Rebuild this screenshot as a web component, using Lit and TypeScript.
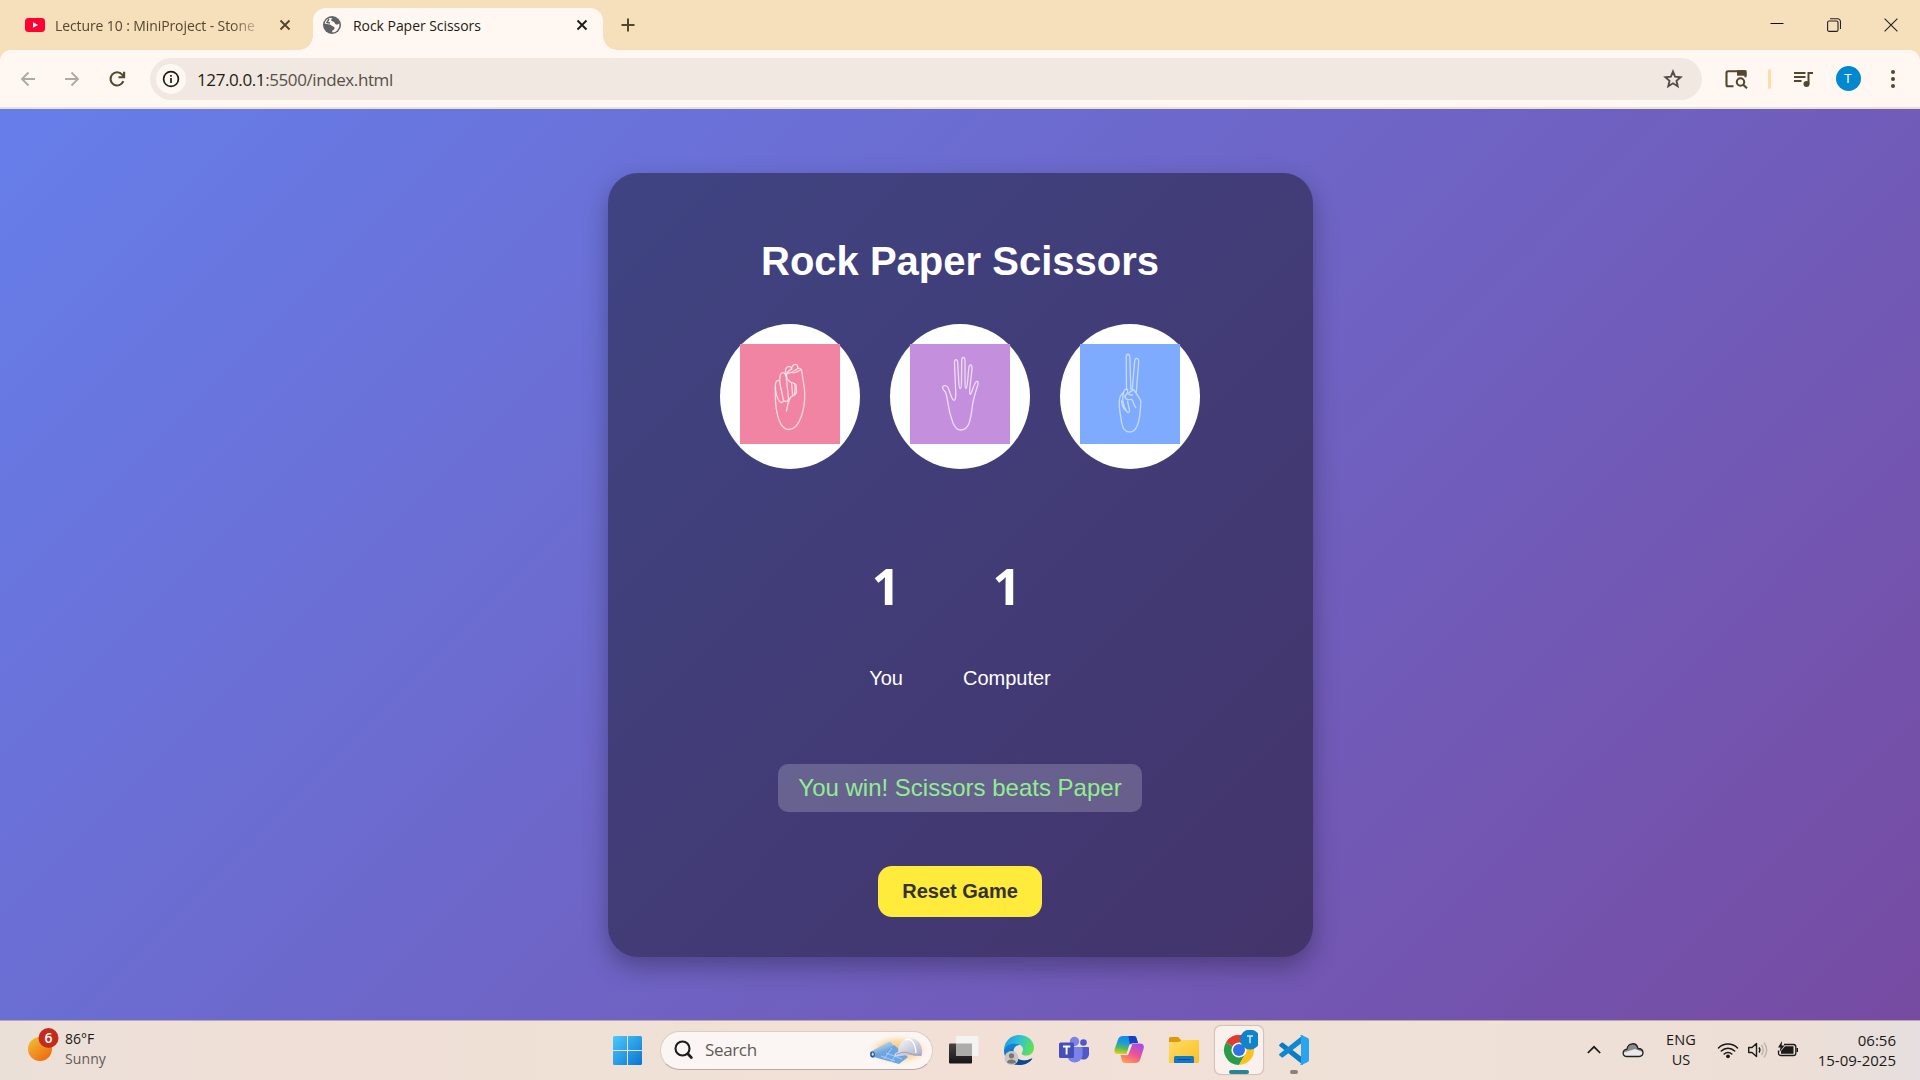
import { LitElement, html, css, svg } from "lit";
import { customElement, property, state } from "lit/decorators.js";

type Choice = "Rock" | "Paper" | "Scissors";

const HANDS: Record<Choice, unknown> = {
  Rock: svg`
    <path d="M35.500 43C34.600 60 37 85.500 49 85.500C60 85.500 65 64 64.700 50C64.500 41 62.500 35 61.800 27C61.500 24.500 59.500 24 58 24.500"/>
    <path d="M35.500 46C35 40 35.800 36.500 37.800 36.300C39.300 36.300 39.800 38 40 40M35.500 46C36.500 52 38.500 57 40.500 58.300C42 59 43.500 58 43.500 56.500L40 40C39.200 33 39.500 29.500 42 28.800C44 28.300 45.500 29.500 45.500 31.500M43.500 56.500C46 58.500 48.500 57 48.500 54.500L46 31.500C44.800 26 45.500 23.200 48.200 22.600C50 22.300 51.500 23.200 51.700 25"/>
    <path d="M46 31C46.500 28 48.500 27 51.500 25C52 21.500 53.500 20.300 55.500 20.300C57.500 20.500 58.300 22.500 57.500 24.500C56 27 53 26.500 51.700 28.200C50 29.500 48 28 46.500 30.500C46.200 34 47.500 36.500 51 38.300C54 39 56.300 39.500 56.300 42L56.500 48.500C55.500 52 52.500 51.500 50.500 53.500C48 57 47.500 62 46.500 67"/>
    <path d="M51.500 39C52 43 52.500 48 52.500 51.500M54.500 40C55.500 43 55.200 46 54.500 50M51.700 28.500C54 29.500 58 27.500 60.500 26"/>`,
  Paper: svg`
    <path d="M35.500 48C33.500 46 32.300 45.200 32.500 43C33.500 41 36.500 41 38 43.500C40 48 41.500 56.300 44 56.300C46 56.300 46 50 45.500 43L44.500 19C44.300 14.500 47.500 14.500 47.700 19L48.800 38C49 42 49.300 44.500 50.200 44.500C51.300 44.500 51.500 42 51.500 38L51.700 17C51.700 12.300 55 12.300 55 17L55 38C55 42 55 44.500 55.800 44.500C56.800 44.500 57 42 57.500 38L58.800 24C59.300 19.500 62.300 20 62 25L60 43C59.600 47 59.300 50.500 60.300 50.500C61.500 50 63 43 65.500 38.500C67.500 36 68.800 38 67.800 41C66 47 63.500 54 62.500 61C61.500 68 61 75 58.500 80.500C56.500 85 53.500 86 50.500 86C46.500 86 44.500 82.500 43 79C40 71 38.500 64 37.700 58C37.300 54 36.500 51 35.500 48Z"/>`,
  Scissors: svg`
    <path d="M46.500 45L46.200 14C46.200 9 49.800 9 49.900 14L50.800 45.500M52.300 45L54.600 18C55 13 59 13.500 58.700 18L56.300 48"/>
    <path d="M45 52C46 49.500 49.500 49 53.500 45.500C56 49 59 53 60.800 57C60.500 67 59.500 76 57.500 81C55.500 86.500 53 88 49.500 88C45 88 42.500 84 41.500 78C40.500 70 38.500 63 39.400 56C40 52 41 50 43.300 49C43.500 46 46.500 44 47.700 46L47.300 49"/>
    <path d="M45 52C44.500 55 48 56 52 55.500C53.500 58 53.500 61 55.800 63.500M43.300 49C42 54 43 61 46.500 67C47.500 69.500 49.800 69 49.500 66L47.500 57M41.500 57C42 62 44.500 66 46.500 67M49 50.500L52.500 51"/>`,
};

const COLORS: Record<Choice, string> = { Rock: "rock", Paper: "paper", Scissors: "scissors" };

@customElement("browser-chrome")
class BrowserChrome extends LitElement {
  static styles = css`
    :host { display: block; background: #f6dfbb; font-family: "Open Sans", "Noto Sans", sans-serif; color: #544730; }
    svg { display: block; flex: none; fill: none; }
    .tabs { height: 50px; display: flex; align-items: stretch; }
    .tab { display: flex; align-items: center; box-sizing: border-box; font-size: 14px; }
    .bg { width: 313px; padding: 0 21px 0 25px; }
    .label { white-space: nowrap; flex: 1; letter-spacing: -0.05px; }
    .bg .label { margin: 0 12px 0 10px; -webkit-mask-image: linear-gradient(90deg, #000 176px, transparent 210px); letter-spacing: -0.1px; }
    .active { width: 290px; margin-top: 8px; padding: 0 14px 8px 9px; background: #fff8f2; border-radius: 13px 13px 0 0; color: #1f1b13; position: relative; }
    .active::before, .active::after { content: ""; position: absolute; bottom: 0; width: 14px; height: 14px; }
    .active::before { right: 100%; background: radial-gradient(circle at 0 0, transparent 13.500px, #fff8f2 14px); }
    .active::after { left: 100%; background: radial-gradient(circle at 100% 0, transparent 13.500px, #fff8f2 14px); }
    .active .label { margin-left: 11px; }
    .plus { align-self: center; margin-left: 18px; }
    .win { margin-left: auto; display: flex; align-items: center; gap: 43px; padding-right: 22px; }
    .bar { height: 57px; box-sizing: border-box; background: #fff8f2; border-radius: 11px 11px 0 0; display: flex; align-items: center; padding: 0 19.500px 0 18px; }
    .edge { height: 2px; background: #ebdfce; }
    .nav { display: flex; gap: 24px; }
    .omni { flex: 1; height: 42px; margin: 0 22px 0 22px; border-radius: 21px; background: #f0e8e1; display: flex; align-items: center; padding: 0 19px 0 6px; }
    .info { width: 30px; height: 30px; border-radius: 50%; background: #fff8f2; display: grid; place-items: center; }
    .url { flex: 1; margin-left: 11px; padding-top: 1px; font-size: 17px; letter-spacing: -0.4px; color: #56504a; }
    .url b { font-weight: 400; color: #1f1b13; }
    .div { width: 3px; height: 20px; border-radius: 2px; background: #ffdcaa; margin: 0 22px 0 20px; }
    .me { width: 25px; height: 25px; border-radius: 50%; background: #0288d1; color: #fff; font: 13px/25px Roboto, sans-serif; text-align: center; margin: 0 24px 0 22.500px; }
  `;
  render() {
    const x = (c: string) => html`<svg width="14" height="14" viewBox="0 0 14 14" stroke=${c} stroke-width="1.9"><path d="M2.500 2.500l9 9M11.500 2.500l-9 9"/></svg>`;
    return html`
      <div class="tabs">
        <div class="tab bg">
          <svg width="20" height="14" viewBox="0 0 20 14"><rect width="20" height="14" rx="3.500" fill="#ff0033"/><path d="M8 4.200l5 2.800-5 2.800z" fill="#fff"/></svg>
          <span class="label">Lecture 10 : MiniProject - Stone</span>
          ${x("#544730")}
        </div>
        <div class="tab active">
          <svg width="20" height="20" viewBox="0 0 20 20"><circle cx="10" cy="10" r="9" fill="#5f6368"/><path d="M10.500 3.200C8.500 4 9 6 11 6.600C13 7 12.500 9 14 9.500C15.500 9.800 16.500 9 17.300 8.500C18 13 15 17.300 10.500 17.500L10 16C11.500 15 13 14 12.500 12.500C12 11 9.500 11.500 9 10C8 9 5 9.600 2.600 8.500C3.500 5 6.500 2.500 10.500 3.200Z" fill="#fff8f2"/><path d="M7 4L5 7.500L8 8M3 12L7 13.500L8 17" stroke="#5f6368" stroke-width="1.500"/></svg>
          <span class="label">Rock Paper Scissors</span>
          ${x("#1f1b13")}
        </div>
        <svg class="plus" width="14" height="14" viewBox="0 0 14 14" stroke="#544730" stroke-width="2"><path d="M7 .5v13M.5 7h13"/></svg>
        <div class="win">
          <svg width="14" height="14" viewBox="0 0 14 14" stroke="#111" stroke-width="1"><path d="M.5 5.500h13"/></svg>
          <svg width="14" height="14" viewBox="0 0 14 14" stroke="#222" stroke-width="1.100"><rect x=".6" y="3" width="10.400" height="10.400" rx="1.500"/><path d="M3 .8h7.500a3 3 0 013 3V11"/></svg>
          <svg width="14" height="14" viewBox="0 0 14 14" stroke="#222" stroke-width="1.100"><path d="M.6.6l12.800 12.800M13.400.6L.6 13.400"/></svg>
        </div>
      </div>
      <div class="bar">
        <div class="nav">
          <svg width="20" height="20" viewBox="0 0 20 20" stroke="#b0aaa4" stroke-width="1.900"><path d="M17 10H4M10.500 3.500L4 10l6.500 6.500"/></svg>
          <svg width="20" height="20" viewBox="0 0 20 20" stroke="#b0aaa4" stroke-width="1.900"><path d="M3 10h13M9.500 3.500L16 10l-6.500 6.500"/></svg>
          <svg width="22" height="20" viewBox="-1 0 22 20" stroke="#544730" stroke-width="2.100"><path d="M16.300 12.200A6.600 6.600 0 1 1 15.200 5.700L16.800 7.500"/><path d="M17.100 2.800V8.200H11.500" /></svg>
        </div>
        <div class="omni">
          <div class="info"><svg width="18" height="18" viewBox="0 0 18 18" stroke="#1f1b13" stroke-width="1.700"><circle cx="9" cy="9" r="7.400"/><path d="M9 8v5M9 5v1.700"/></svg></div>
          <div class="url"><b>127.0.0.1</b>:5500/index.html</div>
          <svg width="20" height="20" viewBox="0 0 20 20" stroke="#544d47" stroke-width="1.900" stroke-linejoin="miter"><path d="M10 2.600l2.100 5.100 5.500.5-4.100 3.600 1.200 5.400-4.700-2.900-4.700 2.900 1.200-5.400L2.400 8.200l5.500-.5z"/></svg>
        </div>
        <svg width="24" height="20" viewBox="0 0 24 20" stroke="#544730" stroke-width="2.100"><path d="M9.500 17.200H4a1.500 1.500 0 01-1.500-1.500V3.700A1.500 1.500 0 014 2.200h16a1.500 1.500 0 011.500 1.500v4.500"/><path d="M13 1.200h9.500v5.500H13z" fill="#544730" stroke="none"/><circle cx="16.500" cy="13" r="3.700"/><path d="M19.200 15.700l3.800 3.600"/></svg>
        <div class="div"></div>
        <svg width="20" height="18" viewBox="0 0 20 18" stroke="#544730" stroke-width="2"><path d="M1 3h11.500M1 7h11.500M1 11h7.500M15.500 14V3H20"/><circle cx="13.500" cy="14" r="3" fill="#544730" stroke="none"/></svg>
        <div class="me">T</div>
        <svg width="16" height="20" viewBox="0 0 16 20"><g fill="#544730"><circle cx="8" cy="3" r="2"/><circle cx="8" cy="10" r="2"/><circle cx="8" cy="17" r="2"/></g></svg>
      </div>
      <div class="edge"></div>`;
  }
}

@customElement("choice-button")
class ChoiceButton extends LitElement {
  @property() choice: Choice = "Rock";
  static styles = css`
    .disc { width: 140px; height: 145px; box-sizing: border-box; padding: 20px 20px 25px; border-radius: 50%; background: #fff; cursor: pointer; }
    svg { display: block; fill: none; stroke: rgba(255, 255, 255, 0.68); stroke-width: 1.35; stroke-linecap: round; stroke-linejoin: round; }
    .rock { background: #f183a3; }
    .paper { background: #c48fdc; }
    .scissors { background: #7fabff; stroke: rgba(255, 255, 255, 0.55); }
  `;
  render() {
    return html`<div class="disc" role="button"><svg class=${COLORS[this.choice]} width="100" height="100" viewBox="0 0 100 100">${HANDS[this.choice]}</svg></div>`;
  }
}

@customElement("game-board")
class GameBoard extends LitElement {
  @state() private you = 1;
  @state() private computer = 1;
  @state() private message = "You win! Scissors beats Paper";
  static styles = css`
    :host { display: flex; align-items: center; justify-content: center; background: linear-gradient(135deg, #667eea, #764ba2); font-family: "Liberation Sans", Arial, sans-serif; color: #fff; }
    .card { width: 705px; height: 784px; box-sizing: border-box; padding: 63px 0 40px; border-radius: 30px; background: rgba(0, 0, 0, 0.4); box-shadow: 0 10px 25px rgba(0, 0, 0, 0.3); display: flex; flex-direction: column; align-items: center; }
    h1 { margin: 0 0 38px; font-size: 40px; line-height: 50px; height: 50px; }
    .choices { display: flex; gap: 30px; }
    .scores { display: flex; gap: 60px; text-align: center; margin-top: 88px; }
    .num { font: 700 50px/58px "Open Sans", sans-serif; }
    .who { font-size: 20px; line-height: 24px; margin-top: 51px; }
    .msg { width: 364px; height: 48px; line-height: 47px; margin-top: 74px; text-align: center; font-size: 24px; border-radius: 10px; background: rgba(255, 255, 255, 0.2); color: #90ee90; }
    .reset { width: 164px; height: 51px; margin-top: 54px; padding: 0; border: 0; border-radius: 14px; background: #ffeb3b; color: #333; font: 700 20px "Liberation Sans", Arial, sans-serif; }
  `;
  private reset() {
    this.you = 0;
    this.computer = 0;
    this.message = "Play your move";
  }
  render() {
    const choices: Choice[] = ["Rock", "Paper", "Scissors"];
    return html`<div class="card">
      <h1>Rock Paper Scissors</h1>
      <div class="choices">${choices.map((c) => html`<choice-button .choice=${c}></choice-button>`)}</div>
      <div class="scores">
        <div><div class="num">${this.you}</div><div class="who">You</div></div>
        <div><div class="num">${this.computer}</div><div class="who">Computer</div></div>
      </div>
      <div class="msg">${this.message}</div>
      <button class="reset" @click=${this.reset}>Reset Game</button>
    </div>`;
  }
}

@customElement("task-bar")
class TaskBar extends LitElement {
  static styles = css`
    :host { display: flex; align-items: center; box-sizing: border-box; border-top: 1px solid #b9a9a5; padding-bottom: 1px; background: linear-gradient(90deg, #ebe0d8, #f0dfd7 17%, #efe1d6 30%, #f2e0d7 50%, #efe1d7 75%, #eddfd6 93%, #e6dfdf); font: 14px/20px "Open Sans", "Noto Sans", sans-serif; color: #1b1a19; }
    svg { display: block; flex: none; fill: none; }
    .weather { width: 603px; box-sizing: border-box; padding-left: 28px; display: flex; align-items: center; gap: 5px; }
    .weather div, .lang, .clock { position: relative; top: -0.5px; }
    .dim { color: #605b57; letter-spacing: 0.1px; }
    .slot { width: 48px; height: 48px; margin-right: 7px; display: grid; place-items: center; position: relative; border-radius: 6px; }
    .start { width: 49px; margin-right: 8px; }
    .on { background: #f9f1ed; box-shadow: 0 0 1px 0.5px rgba(150, 110, 90, 0.3); }
    .mark { position: absolute; bottom: 0; height: 4px; width: 8px; border-radius: 2px; background: #8a817c; }
    .on .mark { width: 20px; background: #2a8494; }
    .search { width: 273px; height: 39px; box-sizing: border-box; margin-right: 7px; padding: 0 4px 0 13px; border-radius: 20px; background: #fbf6f3; border: 1px solid #dccdc5; border-bottom-color: #b9aaa4; display: flex; align-items: center; font-size: 17px; color: #5f5b58; letter-spacing: -0.35px; }
    .search span { flex: 1; margin-left: 11px; }
    .tray { margin-left: auto; padding-right: 24px; display: flex; align-items: center; }
    .cloud { margin-left: 21px; }
    .lang { width: 34px; margin: 0 19px 0 20px; text-align: center; letter-spacing: 0.1px; font-size: 14.500px; }
    .clock { width: 97px; text-align: right; white-space: nowrap; letter-spacing: 0; font-size: 15px; }
    .net { display: flex; gap: 8px; align-items: center; }
  `;
  render() {
    return html`
      <div class="weather">
        <svg width="32" height="44" viewBox="0 -22 32 44"><defs><linearGradient id="sun" x1="0" y1="0" x2=".8" y2="1"><stop stop-color="#eec53a"/><stop offset="1" stop-color="#f2660f"/></linearGradient></defs><circle cx="12" cy="-1" r="12" fill="url(#sun)"/><circle cx="20.500" cy="-12" r="10" fill="#c42b1c"/><text x="20.500" y="-7" text-anchor="middle" font-family="Open Sans" font-weight="600" font-size="14" fill="#fff">6</text></svg>
        <div><div>86°F</div><div class="dim">Sunny</div></div>
      </div>
      <div class="slot start"><svg width="29" height="29" viewBox="0 0 29 29"><defs><linearGradient id="w" x1="0" y1="0" x2="1" y2="1" gradientUnits="objectBoundingBox"><stop stop-color="#4cc9fb"/><stop offset="1" stop-color="#0a74d2"/></linearGradient></defs><path d="M1.500 0H14v14H0V1.500A1.500 1.500 0 011.500 0zM15 0h12.500A1.500 1.500 0 0129 1.500V14H15zM0 15h14v14H1.500A1.500 1.500 0 010 27.500zM15 15h14v12.500a1.500 1.500 0 01-1.500 1.500H15z" fill="url(#w)"/></svg></div>
      <div class="search">
        <svg width="20" height="20" viewBox="0 0 20 20" stroke="#1d1d1d"><circle cx="8.500" cy="8.500" r="7" stroke-width="2.100"/><path d="M13.800 13.800l3.600 3.800" stroke-width="2.800" stroke-linecap="round"/></svg>
        <span>Search</span>
        <svg width="60" height="34" viewBox="0 0 60 34"><defs><radialGradient id="glow"><stop stop-color="#ffb545" stop-opacity=".85"/><stop offset=".65" stop-color="#ffd08a" stop-opacity=".6"/><stop offset="1" stop-color="#ffe9cc" stop-opacity="0"/></radialGradient><linearGradient id="hat" x1="0" y1="0" x2="1" y2="1"><stop stop-color="#fff"/><stop offset="1" stop-color="#a7abc4"/></linearGradient><linearGradient id="roll" x1="0" y1="0" x2=".5" y2="1"><stop stop-color="#e4f1fb"/><stop offset="1" stop-color="#4d8cc9"/></linearGradient></defs>
          <ellipse cx="30" cy="17" rx="31" ry="15.500" fill="url(#glow)"/>
          <path d="M6 24l20-12 14 12-9 7z" fill="#6ba5e6"/><path d="M13 23l14 5M18 20l16 6M24 15l-8 11M30 19l-7 10" stroke="#b8d8f8" stroke-width=".8"/>
          <path d="M2 19L20 9q4-1 5 4L6 24.500Q2 25 2 19z" fill="url(#roll)"/><ellipse cx="4.500" cy="21.500" rx="2.300" ry="3" fill="#27598f"/><ellipse cx="4.700" cy="21.200" rx="1" ry="1.600" fill="#cfe3f5"/>
          <path d="M30 19Q31 6 42 5.500Q54 6 54 20l-.5 3-13-1L29 23.500Q25 23 27 20.500z" fill="url(#hat)"/><path d="M37 7q3-1.500 6 0 4.500 4 5 13" stroke="#fff" stroke-width="1.300"/><path d="M28 21.500q9-4 14-1t11 1" stroke="#9a9fba" stroke-width="1"/></svg>
      </div>
      <div class="slot"><svg width="30" height="30" viewBox="0 0 30 30"><defs><linearGradient id="tv" x1="0" y1="0" x2="0" y2="1"><stop stop-color="#444"/><stop offset="1" stop-color="#161616"/></linearGradient></defs><rect x="0" y="8.500" width="23" height="20" rx="1" fill="url(#tv)"/><rect x="7" y="1" width="22.500" height="20" rx="1.500" fill="#f5f3f2"/><path d="M7 8.500h16V21H8.500A1.500 1.500 0 017 19.500z" fill="#aeacab"/></svg></div>
      <div class="slot"><svg width="30" height="30" viewBox="0 0 30 30"><defs><linearGradient id="e1" x1="0" y1=".3" x2="1" y2=".6"><stop stop-color="#1b9de2"/><stop offset=".5" stop-color="#31c5cf"/><stop offset="1" stop-color="#62e34b"/></linearGradient><linearGradient id="e2" x1="0" y1="0" x2=".4" y2="1"><stop stop-color="#1490df"/><stop offset="1" stop-color="#0b4fa0"/></linearGradient></defs>
        <path d="M0 14C1 5 8 0 15 0c9 0 15 6 15 12.500C30 18 26 20.500 22.500 20.500c-4 0-5.500-1.500-4.500-3 1.500-2 1.500-5-1-7C12 7 5 8.500 0 14z" fill="url(#e1)"/>
        <path d="M0 14.500C3 8.500 11 6.500 16 10c-4 0-7 3-6.500 7.500C10 23 16 27.500 24 25c2-.6 3.500-2 4.500-1.500C25.500 28 20.500 30 15 30 6 30-.5 23.500 0 14.500z" fill="url(#e2)"/><path d="M10 15.500c-1 7 5.500 11 13 9.800 2-.5 4-2 5-1.800-2.500 3.500-6 5.800-10.500 6.300C11 29 6.500 22 10 15.500z" fill="#0a4a8e"/>
        <circle cx="7.500" cy="23" r="7" fill="#c9c6c3"/><circle cx="7.500" cy="20.800" r="2.600" fill="#7a7775"/><path d="M3 27.500c0-4 9-4 9 0q-4.500 2.500-9 0z" fill="#7a7775"/></svg></div>
      <div class="slot"><svg width="30" height="30" viewBox="0 0 30 30"><circle cx="15.500" cy="6.500" r="4.700" fill="#7b83eb"/><circle cx="24.500" cy="7.500" r="3.300" fill="#5059c9"/><path d="M19 12h10a1 1 0 011 1v6.500a5.500 5.500 0 01-8 4.500z" fill="#5059c9"/><path d="M8 12h14.500a1 1 0 011 1v7.500a7.800 7.800 0 01-15.500 0z" fill="#7b83eb"/><rect x="0" y="7.500" width="15" height="15.500" rx="1.500" fill="#464eb8"/><path d="M4 11.500h7.300M7.600 11.500v8" stroke="#fff" stroke-width="1.900"/></svg></div>
      <div class="slot"><svg width="30" height="30" viewBox="0 0 30 30"><defs><linearGradient id="c1" x1=".4" y1="0" x2=".2" y2="1"><stop stop-color="#0c8fe8"/><stop offset=".35" stop-color="#1a9cd6"/><stop offset=".65" stop-color="#4fb866"/><stop offset="1" stop-color="#e6d213"/></linearGradient><linearGradient id="c2" x1=".8" y1="0" x2=".2" y2="1"><stop stop-color="#a04cf0"/><stop offset=".5" stop-color="#ec5494"/><stop offset="1" stop-color="#ffa24d"/></linearGradient></defs>
        <path d="M9 1h11q2 0 2.500 2L24 8h-5q-3 0-4 3l-2.500 8H3.500Q-.5 19 .7 14L4 4.500Q5 1 9 1z" fill="url(#c1)"/><path d="M14.500 1H20q2 0 2.500 2L24 8h-5q-2 0-3.200 1.500z" fill="#1840c4"/>
        <path d="M21 28H10.500Q8.500 28 8 26L6.500 20H11q3 0 4-3l2.500-8.500h8Q31 8.500 29.500 14L26 25Q25 28 21 28z" fill="url(#c2)"/><path d="M15.800 9.500h2.500L14.500 19q-.8 2-3.500 1h1.500z" fill="#f2e6e0"/></svg></div>
      <div class="slot"><svg width="30" height="30" viewBox="0 0 30 30"><defs><linearGradient id="f" x1="0" y1="0" x2="1" y2="1"><stop stop-color="#ffdc66"/><stop offset="1" stop-color="#fbc024"/></linearGradient></defs><path d="M0 3.500A1.500 1.500 0 011.500 2H9l3 3v5H0z" fill="#dc9a0a"/><path d="M0 7h10l3-2h17v21.500a1.500 1.500 0 01-1.500 1.500h-27A1.500 1.500 0 010 26.500z" fill="url(#f)"/><path d="M5 28v-5.500A1.500 1.500 0 016.500 21h17a1.500 1.500 0 011.500 1.500V28z" fill="#0f78c8"/><path d="M9 24.500h12" stroke="#0a4f93" stroke-width="1.200" stroke-linecap="round"/></svg></div>
      <div class="slot on"><svg width="38" height="40" viewBox="0 0 38 40">
        <path d="M19 20L6 12.500A15 15 0 0132 12.500z" fill="#e33b2e"/><path d="M19 20L6 12.500A15 15 0 0019 35l6.500-11.300z" fill="#2a9b46"/><path d="M19 20H34A15 15 0 0119 35l6.500-11.500z" fill="#fcc31e"/><path d="M19 12.500h13A15 15 0 0134 20H22z" fill="#fcc31e"/><path d="M6 12.500A15 15 0 0132 12.500H19z" fill="#e33b2e"/><circle cx="19" cy="20" r="7.600" fill="#fff"/><circle cx="19" cy="20" r="6" fill="#2f72e8"/>
        <circle cx="30" cy="9.500" r="9.800" fill="#0d84cc" stroke="#3474a6" stroke-width=".5"/><path d="M27 6h6M30 6v7.300" stroke="#cfe4f3" stroke-width="1.500"/></svg><i class="mark"></i></div>
      <div class="slot"><svg width="30" height="30" viewBox="0 0 30 30"><path d="M.5 9.500l2-1.800q.8-.6 1.600 0L24 23v7L.6 11.200q-1-.8-.1-1.700z" fill="#0b7cc4"/><path d="M.5 20.500l2 1.800q.8.600 1.600 0L24 7V0L.6 18.800q-1 .8-.1 1.700z" fill="#0f88d2"/><path d="M22.500 0l6.300 3q1.200.6 1.200 2v20q0 1.400-1.200 2l-6.300 3q-1 .2-1.500-.6 1 .3 1-1V1.600q0-1.300-1-1 .5-.8 1.500-.6z" fill="#2aa4ee"/></svg><i class="mark"></i></div>
      <div class="tray">
        <svg width="14" height="10" viewBox="0 0 14 10" stroke="#1b1a19" stroke-width="1.700"><path d="M.8 8L7 1.800 13.200 8"/></svg>
        <svg class="cloud" width="22" height="16" viewBox="0 0 22 16"><path d="M5 14.500C-.3 14.500 0 8 5 7.200C6 .5 14.500-.3 16 6.500C22.500 6.500 22.500 14.500 17 14.500z" fill="#8b8b8b"/><path d="M4 14Q1 13 2 10.500L13 7l7.500 3Q21 14 17 14.500z" fill="#e9e9e9"/><path d="M5 14.500C-.3 14.500 0 8 5 7.200C6 .5 14.500-.3 16 6.500C22.500 6.500 22.500 14.500 17 14.500z" stroke="#222" stroke-width="1.300"/></svg>
        <div class="lang">ENG<br />US</div>
        <div class="net">
          <svg width="22" height="18" viewBox="0 0 22 18" stroke="#1b1a19" stroke-width="1.500" stroke-linecap="round"><path d="M1.500 7a13.400 13.400 0 0119 0M4.300 10a9.500 9.500 0 0113.400 0M7.200 13a5.400 5.400 0 017.600 0"/><circle cx="11" cy="15.300" r="1.900" fill="#1b1a19" stroke="none"/></svg>
          <svg width="22" height="18" viewBox="0 0 22 18" stroke="#1b1a19" stroke-width="1.400"><path d="M1.700 6.500H5L9.500 2.500v13L5 11.500H1.700z" stroke-linejoin="round"/><path d="M12 6.500q1.800 2.500 0 5"/><path d="M14.500 4q3.500 5 0 10M17 1.700q5.500 7.300 0 14.600" stroke="#bdb3ad"/></svg>
          <svg width="22" height="18" viewBox="0 0 22 18"><path d="M7 3.500h9.500a2.300 2.300 0 012.300 2.300v6.400a2.300 2.300 0 01-2.300 2.300H3.800a2.300 2.300 0 01-2.300-2.300V9.500" stroke="#1b1a19" stroke-width="1.300"/><path d="M8 5.300h8.500v7.500H4V10z" fill="#1b1a19"/><path d="M19.500 7h1.500v4h-1.500zM5 0L1 6.500h2.500L2.500 11 7.500 4.500H4.700z" fill="#1b1a19"/></svg>
        </div>
        <div class="clock">06:56<br />15-09-2025</div>
      </div>`;
  }
}

@customElement("app-root")
class AppRoot extends LitElement {
  static styles = css`
    :host { display: block; }
    .screen { width: 1920px; height: 1080px; display: grid; grid-template-rows: 109px 911px 60px; overflow: hidden; }
  `;
  render() {
    return html`<div class="screen"><browser-chrome></browser-chrome><game-board></game-board><task-bar></task-bar></div>`;
  }
}
